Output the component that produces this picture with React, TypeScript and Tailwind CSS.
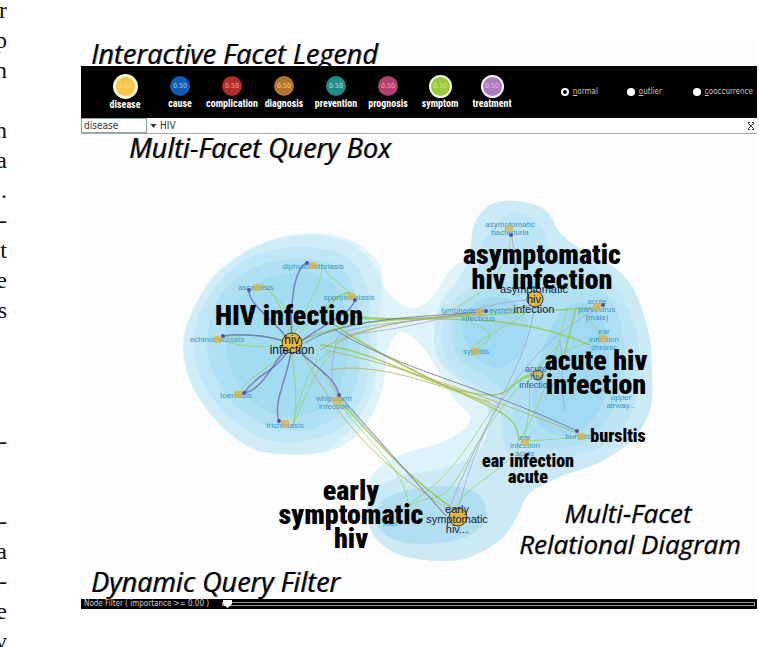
type Point = [number, number];

const passages: { text: string[]; gap: string }[] = [
  { text: ["r", "p", "n"], gap: "-mt-[5px]" },
  { text: ["n", "a", ".", "-", "t", "e", "s"], gap: "mt-[30px]" },
  { text: ["-"], gap: "mt-[101px]" },
  { text: ["-", "a", "-", "e", "v"], gap: "mt-[50px]" },
];

const facets = [
  { name: "disease", value: "0.80", circle: "size-[25px] border-[3px] border-[#fff3cf] bg-[#f5c545] text-[#f9dc8a]", label: "mt-px" },
  { name: "cause", value: "0.50", circle: "size-5 bg-[#0e5cb4] text-[#a9cdf2]", label: "" },
  { name: "complication", value: "0.50", circle: "size-5 bg-[#b32a2a] text-[#f0a9a2]", label: "" },
  { name: "diagnosis", value: "0.50", circle: "size-5 bg-[#b3742c] text-[#f0d3a6]", label: "" },
  { name: "prevention", value: "0.50", circle: "size-5 bg-[#1f8d8a] text-[#a6e0dc]", label: "" },
  { name: "prognosis", value: "0.50", circle: "size-5 bg-[#b0406e] text-[#efb2cb]", label: "" },
  { name: "symptom", value: "0.50", circle: "size-[23px] border-2 border-[#f6fbe9] bg-[#9bcb3c] text-[#cbe88f]", label: "" },
  { name: "treatment", value: "0.50", circle: "size-[23px] border-2 border-[#f9f1fb] bg-[#ac7cc0] text-[#d9bce4]", label: "" },
];

// Closed Catmull-Rom curve through the given points.
function contour(points: Point[]): string {
  const n = points.length;
  let d = `M${points[0][0]},${points[0][1]}`;
  for (let i = 0; i < n; i++) {
    const a = points[(i - 1 + n) % n];
    const b = points[i];
    const c = points[(i + 1) % n];
    const e = points[(i + 2) % n];
    d += `C${b[0] + (c[0] - a[0]) / 6},${b[1] + (c[1] - a[1]) / 6} ${c[0] - (e[0] - b[0]) / 6},${c[1] - (e[1] - b[1]) / 6} ${c[0]},${c[1]}`;
  }
  return d + "Z";
}

const contours: { fill: string; points: Point[] }[] = [
  {
    fill: "#dff3fa",
    points: [[310, 233], [350, 240], [378, 262], [386, 290], [410, 308], [432, 298], [450, 270], [468, 255], [474, 225], [490, 205], [515, 201], [545, 210], [562, 235], [590, 255], [615, 268], [635, 292], [649, 335], [652, 375], [650, 410], [632, 440], [600, 462], [560, 477], [530, 493], [515, 520], [500, 540], [470, 557], [440, 561], [400, 555], [375, 537], [366, 508], [372, 475], [400, 455], [440, 443], [465, 428], [470, 415], [455, 400], [440, 375], [425, 350], [402, 332], [388, 350], [382, 390], [366, 425], [340, 447], [320, 453], [290, 455], [255, 450], [225, 430], [200, 400], [186, 370], [184, 335], [200, 295], [225, 265], [265, 242]],
  },
  { fill: "#cfecf7", points: [[310, 235], [348, 243], [374, 265], [382, 292], [377, 330], [374, 385], [354, 425], [325, 450], [290, 454], [255, 449], [225, 429], [200, 399], [187, 370], [185, 335], [201, 296], [226, 266], [265, 243]] },
  { fill: "#bfe6f5", points: [[305, 247], [345, 256], [366, 285], [370, 330], [366, 385], [345, 425], [305, 441], [265, 439], [227, 415], [202, 380], [194, 340], [207, 300], [235, 266], [270, 251]] },
  { fill: "#b0e0f3", points: [[305, 259], [340, 268], [357, 300], [360, 350], [350, 400], [315, 428], [270, 427], [235, 405], [212, 370], [208, 330], [225, 290], [260, 265]] },
  { fill: "#a3dbf1", points: [[300, 272], [332, 283], [346, 315], [348, 355], [336, 395], [305, 415], [268, 412], [240, 388], [226, 350], [232, 310], [260, 282]] },
  {
    fill: "#cbeaf6",
    points: [[515, 201], [545, 210], [562, 235], [590, 255], [615, 268], [635, 292], [649, 335], [652, 375], [650, 410], [632, 440], [600, 462], [560, 477], [530, 493], [515, 520], [500, 540], [470, 557], [440, 561], [400, 555], [375, 537], [367, 512], [375, 490], [405, 475], [445, 468], [475, 455], [488, 430], [486, 405], [465, 385], [442, 365], [434, 340], [440, 305], [458, 280], [470, 255], [474, 225], [490, 205]],
  },
  { fill: "#bde5f5", points: [[512, 213], [540, 225], [552, 250], [595, 268], [624, 300], [638, 345], [636, 400], [612, 440], [570, 458], [530, 462], [505, 448], [500, 412], [480, 388], [452, 370], [442, 338], [450, 305], [476, 280], [484, 240]] },
  { fill: "#b0e0f4", points: [[590, 283], [614, 305], [625, 350], [618, 400], [588, 440], [545, 448], [516, 435], [512, 402], [488, 378], [460, 360], [452, 328], [466, 300], [500, 284], [545, 276]] },
  { fill: "#a1d9f2", points: [[485, 298], [512, 300], [528, 325], [522, 352], [500, 368], [477, 358], [464, 336], [467, 312]] },
  { fill: "#a1d9f2", points: [[590, 305], [606, 330], [609, 370], [602, 405], [578, 432], [550, 433], [533, 410], [536, 375], [548, 335], [565, 308]] },
  { fill: "#b1def1", points: [[378, 508], [392, 495], [425, 487], [465, 488], [484, 502], [483, 525], [460, 539], [425, 544], [395, 540], [378, 526]] },
];

const edges: { stroke: string; width: number; paths: string[] }[] = [
  {
    stroke: "#8fd45a",
    width: 1,
    paths: [
      "M292,344C300,310 322,290 322,266", "M322,266C330,280 345,285 352,297", "M292,344C285,310 272,290 262,284", "M292,344C300,320 280,300 262,284",
      "M292,344C310,320 330,295 350,292", "M292,344C265,332 240,335 218,338", "M292,344C270,370 250,375 238,394", "M292,344C292,370 300,395 293,426",
      "M335,350C315,370 308,390 293,426", "M330,352C312,360 300,390 293,426", "M292,344C310,360 330,375 337,398", "M292,344C270,350 225,345 218,338",
      "M528,312C500,330 475,340 470,351", "M470,323C500,330 490,345 470,351", "M568,308C560,330 555,380 520,440", "M603,338C570,345 530,370 500,395",
      "M528,375C532,400 528,425 523,441", "M580,435C560,440 540,440 523,441", "M509,225C515,250 500,290 440,315",
      "M457,516C450,490 500,480 523,441", "M560,345C520,380 490,420 465,465S440,490 408,506", "M337,400C370,445 405,470 408,503", "M495,405C465,450 450,480 400,510",
      "M577,307C590,320 600,330 600,340",
    ],
  },
  {
    stroke: "#92c838",
    width: 1.5,
    paths: [
      "M350,318C400,322 500,314 600,307", "M292,344C370,310 420,325 480,312", "M346,315C400,326 500,305 590,345", "M320,345C380,350 440,395 490,395C515,395 515,375 535,375",
      "M335,325C400,370 470,395 500,412C515,420 518,430 519,441", "M337,398C380,445 410,480 458,512", "M350,292C335,295 325,310 322,320", "M576,308C568,340 565,350 561,370",
    ],
  },
  {
    stroke: "#b3ad4c",
    width: 1,
    paths: [
      "M320,350C370,318 450,318 535,305", "M335,345C370,320 450,318 480,312", "M325,350C400,365 480,395 580,434", "M340,330C420,375 450,390 490,402", "M300,350C350,440 390,470 457,516",
      "M330,370C370,362 430,380 500,408",
    ],
  },
  {
    stroke: "#a5a2c5",
    width: 1,
    paths: [
      "M535,300C530,370 480,410 457,516", "M600,307C520,350 485,420 446,516", "M535,300C480,300 450,325 345,335", "M336,345C332,328 365,325 480,314",
      "M336,345C330,370 330,380 339,397", "M535,300C510,285 515,240 511,234", "M560,340C565,370 560,390 565,410", "M339,397L446,516",
    ],
  },
  {
    stroke: "#6a62b3",
    width: 1.5,
    paths: [
      "M292,344C290,310 292,270 307,263", "M292,344C275,320 248,305 249,290", "M292,344C270,335 240,333 223,336", "M292,344C275,375 260,370 244,393",
      "M292,344C275,355 265,390 244,393", "M292,344C290,375 272,400 279,421", "M292,344C310,365 335,375 339,395", "M300,342C330,320 350,315 355,300",
    ],
  },
  {
    stroke: "#6c6595",
    width: 1,
    paths: ["M305,343C350,315 430,318 486,311", "M339,395C370,430 410,475 446,516", "M335,330C400,370 480,385 577,431"],
  },
];

const nodes: Point[] = [[313, 265], [257, 287], [351, 296], [217, 339], [238, 394], [285, 423], [337, 400], [509, 228], [480, 312], [597, 306], [476, 351], [603, 338], [525, 442], [581, 436], [390, 517]];
const endpoints: Point[] = [[307, 263], [249, 290], [355, 300], [223, 336], [244, 393], [279, 421], [339, 395], [511, 235], [486, 311], [603, 305], [577, 431]];
const hubs: { at: Point; r: number }[] = [{ at: [292, 343], r: 10 }, { at: [535, 299], r: 8 }, { at: [538, 375], r: 5 }, { at: [458, 517], r: 9 }];

const nodeLabels: { at: Point; lines: string[] }[] = [
  { at: [313, 269], lines: ["diphyllobothriasis"] },
  { at: [256, 290], lines: ["ascariasis"] },
  { at: [349, 300], lines: ["sporotrichiasis"] },
  { at: [217, 342], lines: ["echinococcosis"] },
  { at: [236, 398], lines: ["toeniasis"] },
  { at: [285, 428], lines: ["trichiniasis"] },
  { at: [334, 401], lines: ["whipworm", "infection"] },
  { at: [510, 227], lines: ["asymptomatic", "bacteriuria"] },
  { at: [478, 313], lines: ["lymphedema system", "infectious"] },
  { at: [597, 304], lines: ["acute", "parvovirus", "(male)"] },
  { at: [604, 334], lines: ["ear", "infection", "chronic"] },
  { at: [476, 354], lines: ["syphilis"] },
  { at: [621, 400], lines: ["upper", "airway..."] },
  { at: [525, 440], lines: ["ear", "infection", "acute"] },
  { at: [578, 439], lines: ["bursitis"] },
  { at: [390, 526], lines: ["iritis"] },
];

const hubLabels: { at: Point; step: number; lines: string[]; style: string }[] = [
  { at: [292, 344], step: 10, lines: ["hiv", "infection"], style: "fill-[#0d1530] text-[12px]" },
  { at: [534, 293], step: 10, lines: ["asymptomatic", "hiv", "infection"], style: "fill-[#10204a] text-[11px]" },
  { at: [536, 372], step: 8, lines: ["acute", "hiv", "infection"], style: "fill-[#1d63a8] text-[9px]" },
  { at: [457, 513], step: 10, lines: ["early", "symptomatic", "hiv..."], style: "fill-[#10204a] text-[11px]" },
];

const callouts: { at: Point; step: number; lines: string[]; style: string }[] = [
  { at: [289, 325], step: 25, lines: ["HIV infection"], style: "text-[28px]" },
  { at: [542, 264], step: 25, lines: ["asymptomatic", "hiv infection"], style: "text-[28px]" },
  { at: [596, 370], step: 24, lines: ["acute hiv", "infection"], style: "text-[28px]" },
  { at: [351, 500], step: 24, lines: ["early", "symptomatic", "hiv"], style: "text-[28px]" },
  { at: [528, 467], step: 16, lines: ["ear infection", "acute"], style: "text-[18px]" },
  { at: [618, 442], step: 16, lines: ["bursltis"], style: "text-[18px]" },
];

function Lines({ at, step, lines, className }: { at: Point; step: number; lines: string[]; className: string }) {
  return (
    <text textAnchor="middle" className={className}>
      {lines.map((line, i) => (
        <tspan key={line} x={at[0]} y={at[1] + i * step}>{line}</tspan>
      ))}
    </text>
  );
}

const heading = "font-['Open_Sans',sans-serif] text-[27px] italic text-black [text-shadow:1px_0_0_#00000080]";
const ui = "font-['DejaVu_Sans_Condensed','DejaVu_Sans',sans-serif]";

function Legend() {
  return (
    <div className="relative flex h-[52px] items-start bg-black pt-[7px] pl-[18px] text-white">
      {facets.map((f, i) => (
        <button key={f.name} type="button" className={`flex w-[52px] shrink-0 flex-col items-center ${i === 0 ? "mr-[3px]" : ""}`}>
          <span className="flex h-[26px] items-center">
            <span className={`flex items-center justify-center rounded-full text-[7px] leading-none ${ui} ${f.circle}`}>{f.value}</span>
          </span>
          <span className={`font-['Roboto_Condensed','Roboto',sans-serif] text-[10px] leading-[10px] font-bold ${f.label}`}>{f.name}</span>
        </button>
      ))}
      <fieldset className={`ml-auto flex pt-[14px] pr-1 text-[8px] leading-[10px] text-[#d3c4bd] ${ui}`}>
        {["normal", "outlier", "cooccurrence"].map((mode, i) => (
          <label key={mode} className={`flex items-center gap-1 ${i < 2 ? "w-[66px]" : ""}`}>
            <input
              type="radio"
              name="mode"
              defaultChecked={i === 0}
              className="size-2 shrink-0 appearance-none rounded-full bg-white checked:border-2 checked:border-white checked:bg-black"
            />
            <span><span className="underline">{mode[0]}</span>{mode.slice(1)}</span>
          </label>
        ))}
      </fieldset>
    </div>
  );
}

function QueryBox() {
  return (
    <div className={`flex h-4 items-stretch border-b border-[#a8a8a8] bg-white text-[10px] text-[#333] ${ui}`}>
      <select aria-label="Facet" className="w-[66px] appearance-none border border-[#8fa3ad] bg-white pl-0.5 leading-none">
        <option>disease</option>
      </select>
      <svg viewBox="0 0 6 4" className="mx-[3px] mt-1.5 h-1 w-[7px]" aria-hidden="true"><path d="M0 0h6L3 4z" fill="#333" /></svg>
      <input aria-label="Query" defaultValue="HIV" className="min-w-0 flex-1 bg-white leading-none outline-none" />
      <button type="button" aria-label="Clear query" className="flex w-3 items-center justify-center">
        <svg viewBox="0 0 8 8" className="size-2" fill="none" stroke="#444"><path d="M1 1l6 6M7 1L1 7M1 .5h2M5 .5h2M1 7.500h2M5 7.500h2" /></svg>
      </button>
    </div>
  );
}

function Diagram() {
  return (
    <svg viewBox="81 163 676 405" className="block w-full" role="img" aria-label="Multi-Facet Relational Diagram">
      {contours.map((c, i) => <path key={i} d={contour(c.points)} fill={c.fill} />)}
      {edges.map((e) => (
        <g key={e.stroke} fill="none" stroke={e.stroke} strokeWidth={e.width} strokeOpacity=".75">
          {e.paths.map((d) => <path key={d} d={d} />)}
        </g>
      ))}
      {nodeLabels.map((l) => <Lines key={l.at.join()} at={l.at} step={8} lines={l.lines} className="fill-[#3c96c6] font-['Liberation_Sans',sans-serif] text-[8px]" />)}
      {nodes.map(([x, y]) => <rect key={`${x},${y}`} x={x - 4} y={y - 3} width="8" height="7" rx="2" fill="#dfb23c" fillOpacity=".75" />)}
      {endpoints.map(([x, y]) => <circle key={`${x},${y}`} cx={x} cy={y} r="2" fill="#5550a8" />)}
      {hubs.map((h) => <circle key={h.at.join()} cx={h.at[0]} cy={h.at[1]} r={h.r} fill="#e5b73b" stroke="#3d3a20" />)}
      {hubLabels.map((l) => <Lines key={l.at.join()} at={l.at} step={l.step} lines={l.lines} className={`font-['Liberation_Sans',sans-serif] ${l.style}`} />)}
      {callouts.map((l) => <Lines key={l.at.join()} at={l.at} step={l.step} lines={l.lines} className={`font-['Roboto_Condensed','Roboto',sans-serif] font-black ${l.style}`} />)}
      <g stroke="#000" strokeOpacity=".35">
        <Lines at={[628, 523]} step={31} lines={["Multi-Facet"]} className="font-['Open_Sans',sans-serif] text-[26px] italic" />
        <Lines at={[630, 554]} step={31} lines={["Relational Diagram"]} className="font-['Open_Sans',sans-serif] text-[26px] italic" />
      </g>
    </svg>
  );
}

export default function App() {
  return (
    <main className="flex min-h-screen items-start overflow-hidden bg-white">
      <aside className="h-screen w-[7px] shrink-0 overflow-hidden font-['Liberation_Serif',serif] text-[24px] leading-[30px] text-[#111]">
        {passages.map((p, i) => (
          <div key={i} className={p.gap}>
            {p.text.map((t, j) => <p key={j} className="flex h-[30px] justify-end">{t}</p>)}
          </div>
        ))}
      </aside>
      <section className="mt-10 mr-0.5 ml-[74px] min-w-0 flex-1 bg-[#fdfdfd]">
        <h2 className={`h-[26px] pl-2.5 leading-7 ${heading}`}>Interactive Facet Legend</h2>
        <Legend />
        <QueryBox />
        <h2 className={`h-[29px] pl-12 leading-7 ${heading}`}>Multi-Facet Query Box</h2>
        <Diagram />
        <h2 className={`h-[31px] pl-2.5 leading-[27px] ${heading}`}>Dynamic Query Filter</h2>
        <label className={`flex h-[10px] items-center bg-black pr-0.5 pl-[3px] text-[8px] leading-none text-[#d8d4d0] ${ui}`}>
          <span className="w-[138px] shrink-0 whitespace-nowrap">Node Filter ( importance &gt;= 0.00 )</span>
          <input
            type="range"
            min="0"
            max="1"
            step="0.01"
            defaultValue="0"
            className="h-2 min-w-0 flex-1 appearance-none bg-transparent [&::-webkit-slider-runnable-track]:h-1 [&::-webkit-slider-runnable-track]:border [&::-webkit-slider-runnable-track]:border-[#9a9a9a] [&::-webkit-slider-thumb]:-mt-[3px] [&::-webkit-slider-thumb]:h-2 [&::-webkit-slider-thumb]:w-[9px] [&::-webkit-slider-thumb]:appearance-none [&::-webkit-slider-thumb]:bg-white [&::-webkit-slider-thumb]:[clip-path:polygon(0_0,100%_0,100%_50%,50%_100%,0_50%)]"
          />
        </label>
      </section>
    </main>
  );
}
